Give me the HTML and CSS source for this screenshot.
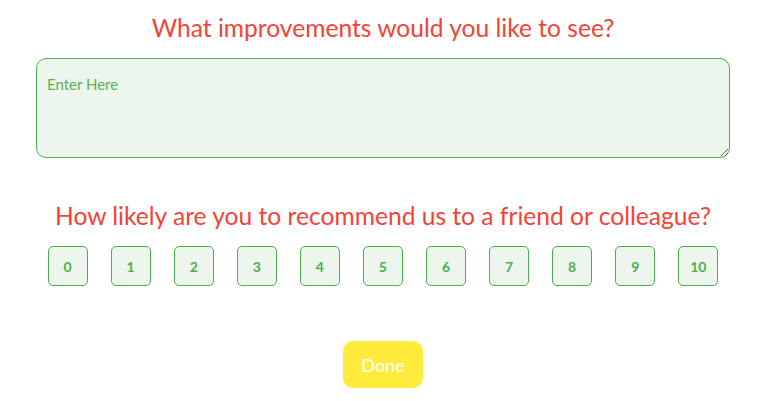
FILE: index.html
```html
<!DOCTYPE html>
<html lang="en">
<head>
  <meta charset="UTF-8">
  <meta name="viewport" content="width=device-width, initial-scale=1.0">
  <title>Feedback</title>
  <link rel="stylesheet" href="styles.css">
</head>
<body>
  <div class="survey">
    <h2 class="question">What improvements would you like to see?</h2>
    <textarea class="answer" placeholder="Enter Here"></textarea>

    <h2 class="question question-nps">How likely are you to recommend us to a friend or colleague?</h2>
    <div class="scale">
      <button class="score">0</button>
      <button class="score">1</button>
      <button class="score">2</button>
      <button class="score">3</button>
      <button class="score">4</button>
      <button class="score">5</button>
      <button class="score">6</button>
      <button class="score">7</button>
      <button class="score">8</button>
      <button class="score">9</button>
      <button class="score">10</button>
    </div>

    <div class="actions">
      <button class="btn-done">Done</button>
    </div>
  </div>
</body>
</html>
```

FILE: styles.css
```css
body {
  margin: 0;
  padding: 0;
  background-color: #fff;
  font-family: Lato, 'Noto Sans', sans-serif;
}
.survey {
  width: 694px;
  margin-left: 36px;
  display: flex;
  flex-direction: column;
}
.question {
  margin: 12px 0 0;
  text-align: center;
  font-weight: normal;
  font-size: 24.6px;
  line-height: 32px;
  color: #f44336;
}
.question-nps {
  margin-top: 42px;
}
.answer {
  margin-top: 14px;
  height: 100px;
  box-sizing: border-box;
  padding: 16px 10px;
  border: 1px solid #4caf50;
  border-radius: 10px;
  background-color: #ecf6ed;
  font-family: inherit;
  font-size: 15px;
  color: #333;
  resize: vertical;
  outline: none;
}
.answer::placeholder {
  color: #5fae4f;
}
.scale {
  margin-top: 14px;
  display: flex;
  justify-content: space-around;
}
.score {
  width: 40px;
  height: 40px;
  padding: 0;
  border: 1px solid #4caf50;
  border-radius: 5px;
  background-color: #ecf6ed;
  color: #4caf50;
  font-family: inherit;
  font-size: 14px;
  font-weight: bold;
  cursor: pointer;
}
.actions {
  margin-top: 55px;
  display: flex;
  justify-content: center;
}
.btn-done {
  width: 80px;
  height: 47px;
  border: none;
  border-radius: 10px;
  background-color: #ffeb3b;
  color: #fff;
  font-family: inherit;
  font-size: 18px;
  cursor: pointer;
}
```
